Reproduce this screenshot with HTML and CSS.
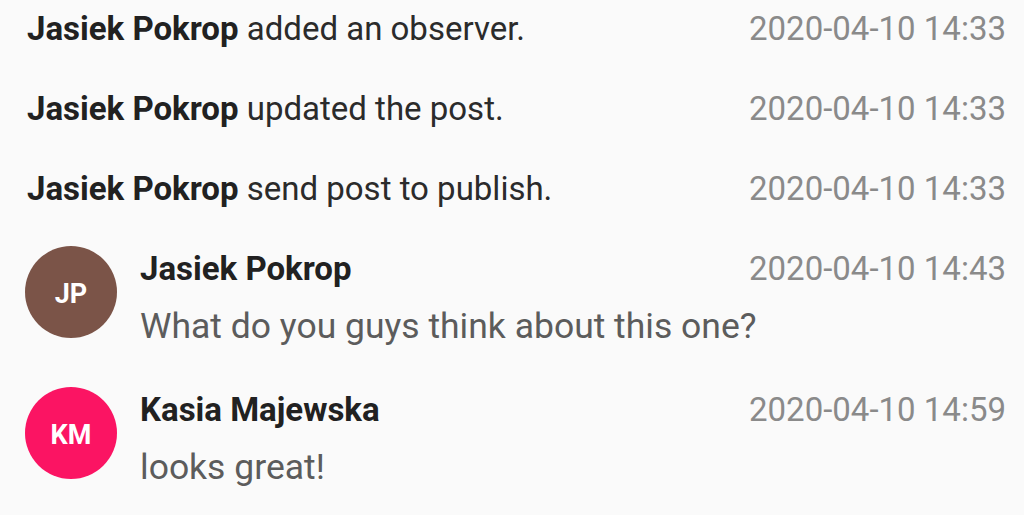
FILE: index.html
```html
<!DOCTYPE html>
<html lang="en">
<head>
  <meta charset="UTF-8" />
  <meta name="viewport" content="width=device-width, initial-scale=1.0"/>
  <title>Post activity</title>
  <link rel="stylesheet" href="styles.css">
</head>
<body>
  <div class="feed">
    <div class="event">
      <div class="event-text"><b>Jasiek Pokrop</b> added an observer.</div>
      <div class="time">2020-04-10 14:33</div>
    </div>
    <div class="event">
      <div class="event-text"><b>Jasiek Pokrop</b> updated the post.</div>
      <div class="time">2020-04-10 14:33</div>
    </div>
    <div class="event">
      <div class="event-text"><b>Jasiek Pokrop</b> send post to publish.</div>
      <div class="time">2020-04-10 14:33</div>
    </div>

    <div class="comment">
      <div class="avatar brown">JP</div>
      <div class="comment-body">
        <div class="comment-head">
          <div class="author">Jasiek Pokrop</div>
          <div class="time">2020-04-10 14:43</div>
        </div>
        <div class="message">What do you guys think about this one?</div>
      </div>
    </div>

    <div class="comment">
      <div class="avatar pink">KM</div>
      <div class="comment-body">
        <div class="comment-head">
          <div class="author">Kasia Majewska</div>
          <div class="time">2020-04-10 14:59</div>
        </div>
        <div class="message">looks great!</div>
      </div>
    </div>
  </div>
</body>
</html>
```

FILE: styles.css
```css
body {
  font-family: Roboto, 'Liberation Sans', sans-serif;
  background: #fafafa;
  color: #212121;
  margin: 0;
  padding: 9px 18px 0 27px;
  font-size: 33px;
  line-height: 40px;
}
.feed {
  display: flex;
  flex-direction: column;
}
.event {
  display: flex;
  justify-content: space-between;
  margin-bottom: 40px;
}
.event-text {
  color: #2b2b2b;
}
.event-text b {
  color: #212121;
  font-weight: 700;
}
.time {
  color: #8a8a8a;
}
.comment {
  display: flex;
  align-items: flex-start;
  gap: 23px;
  margin-top: -3px;
  margin-bottom: 44px;
}
.avatar {
  flex: none;
  width: 92px;
  height: 92px;
  border-radius: 50%;
  margin-left: -2px;
  display: flex;
  align-items: center;
  justify-content: center;
  color: #fff;
  font-size: 27px;
  font-weight: 700;
  padding-top: 3px;
  box-sizing: border-box;
}
.avatar.brown {
  background: #7b5448;
}
.avatar.pink {
  background: #fb1463;
}
.comment-body {
  flex: 1;
  padding-top: 3px;
}
.comment-head {
  display: flex;
  justify-content: space-between;
}
.author {
  font-weight: 700;
}
.message {
  margin-top: 17px;
  font-size: 35.5px;
  color: #5c5c5c;
}
```
